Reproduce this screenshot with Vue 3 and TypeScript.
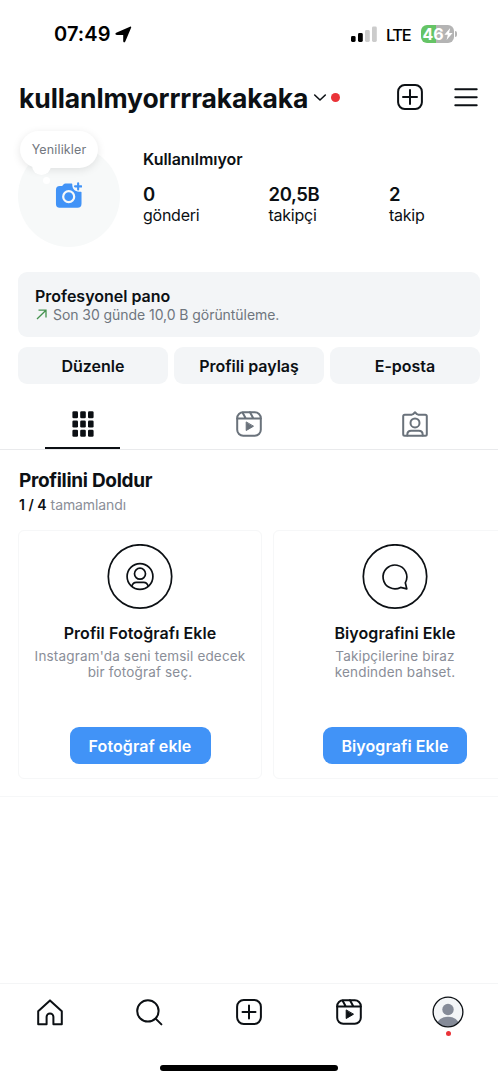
<script setup lang="ts">
interface Stat { value: string; label: string }
interface Card { kind: 'person' | 'chat'; title: string; lines: string[]; action: string }

const stats: Stat[] = [
  { value: '0', label: 'gönderi' },
  { value: '20,5B', label: 'takipçi' },
  { value: '2', label: 'takip' },
]
const actions: string[] = ['Düzenle', 'Profili paylaş', 'E-posta']
const cards: Card[] = [
  { kind: 'person', title: 'Profil Fotoğrafı Ekle', lines: ["Instagram'da seni temsil edecek", 'bir fotoğraf seç.'], action: 'Fotoğraf ekle' },
  { kind: 'chat', title: 'Biyografini Ekle', lines: ['Takipçilerine biraz', 'kendinden bahset.'], action: 'Biyografi Ekle' },
]
</script>

<template>
  <div class="screen">
    <div class="status">
      <span class="time">07:49</span>
      <svg class="loc" width="17" height="17" viewBox="0 0 17 17"><path d="M1.200 6.700 15 .7c.9-.4 1.500.3 1.100 1.100L10.300 15.600c-.6 1.300-2.100 1-2.100-.5V8.900H1.900C.2 8.900-.1 7.300 1.200 6.700z" fill="#000" /></svg>
      <svg class="signal" width="26" height="17" viewBox="0 0 26 17">
        <rect x="0" y="10" width="4.600" height="6" rx="1.400" /><rect x="7" y="7" width="4.800" height="9" rx="1.400" />
        <rect class="off" x="14" y="4" width="4.800" height="12" rx="1.400" /><rect class="off" x="21" y="0.500" width="4.800" height="15.500" rx="1.400" />
      </svg>
      <span class="lte">LTE</span>
      <div class="battery">
        <span class="pct">46</span>
        <svg width="9" height="12" viewBox="0 0 9 12"><path d="M6.200 0 .4 6.800h3.400L2.600 12l6-7.100H5.100z" fill="#fff" /></svg>
      </div>
      <div class="nub"></div>
    </div>

    <header class="head">
      <h1>kullanlmyorrrrakakaka</h1>
      <svg class="chev" width="14" height="9" viewBox="0 0 14 9"><path d="m1.700 2 5.300 5 5.300-5" /></svg>
      <i class="dot"></i>
      <svg class="add" width="26" height="26" viewBox="0 0 26 26"><rect x="1.100" y="1.100" width="23.800" height="23.800" rx="6.600" /><path d="M13 6v14M6 13h14" /></svg>
      <svg class="menu" width="24" height="20" viewBox="0 0 24 20"><path d="M1.300 2.300h21.400M1.300 10.300h21.400M1.300 18.300h21.400" /></svg>
    </header>

    <section class="profile">
      <div class="avatar">
        <svg class="camera" width="27" height="27" viewBox="0 0 28 28">
          <path d="M5 4.200h2.400L9 2.300C9.500 1.700 10 1.500 10.800 1.500h6.500c.3 0 .6.400.6.800-.1 4.700 2.500 7.500 7 7.700h2c.4 0 .6.300.6.700v11.600c0 3.200-1.300 4.300-4.200 4.300H5.500C2.200 26.600 1 25.400 1 22.200V8.400c0-3 1.200-4.200 4-4.200z" fill="#4193f7" />
          <circle cx="14.200" cy="15.200" r="5.700" fill="none" stroke="#f7f9f9" stroke-width="2.300" />
          <path d="M24 1.300v6.400M20.800 4.500h6.400" stroke="#4193f7" stroke-width="2.200" stroke-linecap="round" />
        </svg>
        <div class="bubble"><span>Yenilikler</span></div>
        <i class="tail"></i><i class="bead"></i>
      </div>
      <div class="info">
        <div class="name">Kullanılmıyor</div>
        <div class="stats">
          <div v-for="s in stats" :key="s.label" class="stat"><b>{{ s.value }}</b><span>{{ s.label }}</span></div>
        </div>
      </div>
    </section>

    <section class="panel">
      <div class="ptitle">Profesyonel pano</div>
      <div class="psub">
        <svg width="12" height="12" viewBox="0 0 12 12"><path d="M1 10 9.700 1.500M2.500 1.200h7.500v7.300" /></svg>
        <span>Son 30 günde 10,0 B görüntüleme.</span>
      </div>
    </section>

    <div class="actions"><button v-for="a in actions" :key="a">{{ a }}</button></div>

    <div class="tabs">
      <div class="tab active">
        <svg width="22" height="26" viewBox="0 0 22 26">
          <template v-for="r in 3" :key="r">
            <rect v-for="c in 3" :key="c" :x="(c - 1) * 7.800 + 0.400" :y="(r - 1) * 9.300 + 0.200" width="5.600" height="7" rx="1.300" fill="#0c1014" />
          </template>
        </svg>
      </div>
      <div class="tab">
        <svg class="line grey" width="26" height="26" viewBox="0 0 26 26">
          <rect x="1.200" y="1.200" width="23.600" height="23.600" rx="6" /><path d="M1.200 7.400h23.600M6.500 1.500l3.300 5.900M14 1.200l3.400 6.200" /><path class="fill" d="M10.200 11.300v8.200l7-4.100z" />
        </svg>
      </div>
      <div class="tab">
        <svg class="line grey" width="26" height="26" viewBox="0 0 26 26">
          <path d="M2.700 3.700h7.100l1.200-.5 2-1.900 2 1.900 1.200.5h7.100c1 0 1.500.5 1.500 1.500v18.100c0 1-.5 1.500-1.500 1.500H2.700c-1 0-1.500-.5-1.500-1.500V5.200c0-1 .5-1.500 1.500-1.500z" /><circle cx="13" cy="11.900" r="4.500" /><path d="M5.300 24.500v-.8c0-2.200 1.600-3.900 3.900-3.900h7.600c2.300 0 3.900 1.700 3.900 3.900v.8" />
        </svg>
      </div>
    </div>

    <section class="complete">
      <h2>Profilini Doldur</h2>
      <p class="progress"><b>1 / 4</b><span>tamamlandı</span></p>
      <div class="cards">
        <article v-for="c in cards" :key="c.title" class="card" :class="c.kind">
          <svg class="badge" width="66" height="66" viewBox="0 0 66 66">
            <circle cx="33" cy="32.500" r="31.700" />
            <template v-if="c.kind === 'person'">
              <circle cx="33" cy="32.500" r="12.900" /><circle cx="33" cy="29.700" r="5.500" /><path d="M24.800 42c.8-2.300 2.200-3.700 4.400-3.700h7.600c2.200 0 3.600 1.400 4.400 3.700" />
            </template>
            <path v-else d="M43.300 38.800A11.900 11.900 0 1 0 38.600 43.400l6.200 1.500z" />
          </svg>
          <h3>{{ c.title }}</h3>
          <p><span v-for="l in c.lines" :key="l">{{ l }}</span></p>
          <button>{{ c.action }}</button>
        </article>
      </div>
    </section>

    <nav class="nav">
      <div><svg class="line" width="26" height="27" viewBox="0 0 26 27"><path d="M1.200 25.300V12.300L13 1.400l11.800 10.900v13h-8.400v-7.500a3.400 3.400 0 0 0-6.800 0v7.500z" /></svg></div>
      <div><svg class="line" width="27" height="27" viewBox="0 0 27 27"><circle cx="11.900" cy="11.900" r="10.700" /><path d="m19.600 19.600 5.800 5.800" /></svg></div>
      <div><svg class="line" width="26" height="26" viewBox="0 0 26 26"><rect x="1.100" y="1.100" width="23.800" height="23.800" rx="6.600" /><path d="M13 6.500v13M6.500 13h13" /></svg></div>
      <div><svg class="line" width="26" height="26" viewBox="0 0 26 26"><rect x="1.200" y="1.200" width="23.600" height="23.600" rx="6" /><path d="M1.200 7.400h23.600M6.500 1.500l3.300 5.900M14 1.200l3.400 6.200" /><path class="fill" d="M10.200 11.300v8.200l7-4.100z" /></svg></div>
      <div class="me">
        <svg width="32" height="32" viewBox="0 0 32 32">
          <defs><clipPath id="face"><circle cx="16" cy="16" r="14.500" /></clipPath></defs>
          <circle cx="16" cy="16" r="15" fill="#f3f5f7" /><g clip-path="url(#face)" fill="#858b98"><circle cx="16" cy="13.500" r="5.700" /><ellipse cx="16" cy="28.700" rx="11" ry="8" /></g>
          <circle cx="16" cy="16" r="14.900" fill="none" stroke="#0c1014" stroke-width="1.300" />
        </svg>
        <i></i>
      </div>
    </nav>
    <div class="homebar"></div>
  </div>
</template>

<style>
body { margin: 0; background: #fff; }
</style>

<style scoped>
* { box-sizing: border-box; }
.screen { position: relative; width: 498px; height: 1080px; overflow: hidden; background: #fff; color: #0c1014; font-family: Inter, "Liberation Sans", sans-serif; display: flex; flex-direction: column; white-space: nowrap; }
h1, h2, h3, p { margin: 0; }
button { border: 0; padding: 0; font: inherit; color: inherit; }
svg { display: block; flex: none; }
.status { height: 68px; padding-left: 54px; display: flex; align-items: center; color: #000; }
.time { width: 61px; font-size: 20px; font-weight: 600; letter-spacing: .1px; }
.loc { width: 17px; }
.signal { margin-left: 219px; }
.signal .off { fill: #ccc; }
.lte { width: 35px; margin-left: 9px; padding-top: 1px; font-size: 16.500px; font-weight: 500; letter-spacing: -1.400px; }
.battery { width: 33px; height: 18px; border-radius: 6px; background: linear-gradient(90deg, #65c466 46%, #b4b4b4 46%); display: flex; align-items: center; justify-content: center; color: #fff; }
.pct { font-size: 16px; font-weight: 700; line-height: 18px; }
.nub { width: 2px; height: 6px; margin-left: 1px; border-radius: 0 2px 2px 0; background: #b4b4b4; }
.head { height: 58px; padding-left: 19px; display: flex; align-items: center; }
h1 { width: 294px; padding-top: 1px; font-size: 26.500px; font-weight: 700; letter-spacing: -.12px; line-height: 32px; }
.chev, .add, .menu, .line, .badge { fill: none; stroke: #0c1014; stroke-width: 2; stroke-linecap: round; stroke-linejoin: round; }
.chev { stroke-width: 1.600; }
.dot { width: 9px; height: 9px; margin-left: 4px; border-radius: 50%; background: #ea3338; }
.add { margin-left: 57px; }
.menu { margin-left: 31px; }
.profile { height: 146px; display: flex; }
.avatar { position: relative; width: 102px; height: 102px; margin: 19px 0 0 18px; border-radius: 50%; background: #f7f9f9; }
.camera { position: absolute; left: 37px; top: 37px; }
.bubble { position: absolute; left: 2px; top: -14px; width: 78px; height: 37px; border-radius: 18.500px; background: #fff; box-shadow: 0 2px 8px rgba(0, 0, 0, .1); display: flex; align-items: center; justify-content: center; color: #737880; font-size: 12.500px; letter-spacing: .15px; }
.tail { position: absolute; left: 14px; top: 18px; width: 19px; height: 12px; border-radius: 2px 2px 10px 10px; background: #fff; }
.bead { position: absolute; left: 25px; top: 32px; width: 7px; height: 7px; border-radius: 50%; background: #fff; }
.info { padding: 22px 0 0 23px; }
.name { font-size: 16px; font-weight: 600; line-height: 22px; letter-spacing: -.04px; }
.stats { margin-top: 14px; display: grid; grid-template-columns: 125.500px 120.500px 80px; }
.stat { display: flex; flex-direction: column; }
.stat b { font-size: 18.500px; font-weight: 600; line-height: 21px; letter-spacing: -.4px; }
.stat span { font-size: 16px; line-height: 21px; letter-spacing: -.25px; }
.panel { height: 65px; margin: 0 18px; padding: 14px 17px; border-radius: 9px; background: #f3f5f7; }
.ptitle { font-size: 16px; font-weight: 600; line-height: 20px; }
.psub { display: flex; align-items: center; gap: 5px; font-size: 14px; line-height: 17px; letter-spacing: -.06px; color: #6f767e; }
.psub svg { margin-left: 1px; fill: none; stroke: #459350; stroke-width: 1.300; }
.actions { height: 37px; margin: 10px 18px 0; display: grid; grid-template-columns: 1fr 1fr 1fr; gap: 6px; }
.actions button { border-radius: 9px; background: #f3f5f7; font-size: 16px; font-weight: 600; }
.tabs { height: 66px; border-bottom: 1px solid #e9eaec; display: grid; grid-template-columns: 1fr 1fr 1fr; }
.tab { position: relative; display: flex; justify-content: center; padding-top: 27px; }
.tab.active::after { content: ""; position: absolute; left: 45px; bottom: 0; width: 75px; height: 2px; background: #0c1014; }
.grey { stroke: #6a727b; }
.fill { fill: #0c1014; stroke-width: 1; }
.grey .fill { fill: #6a727b; }
.complete { height: 347px; padding: 18px 0 0 18px; border-bottom: 1px solid #f6f7f8; }
h2 { font-size: 19px; font-weight: 700; line-height: 24px; padding: 1px 0 0 1px; letter-spacing: -.3px; }
.progress { height: 18px; margin-top: 3px; padding-left: 1px; display: flex; gap: 4px; font-size: 14px; line-height: 18px; color: #8a8e98; }
.progress b { font-weight: 600; color: #0c1014; }
.progress span { letter-spacing: -.1px; }
.cards { margin-top: 16px; display: flex; gap: 11px; }
.card { flex: none; width: 244px; height: 249px; border: 1px solid #f6f7f8; border-radius: 6px; padding-top: 13px; display: flex; flex-direction: column; align-items: center; }
.badge { stroke-width: 1.700; }
h3 { margin-top: 12px; font-size: 16px; font-weight: 600; line-height: 22px; letter-spacing: .08px; }
.card p { margin-top: 4px; height: 32px; color: #8a8e98; font-size: 13.500px; letter-spacing: .17px; line-height: 16px; text-align: center; }
.card p span { display: block; }
.card button { width: 141px; height: 37px; margin-top: 47px; border-radius: 9px; background: #4193f7; color: #fff; font-size: 16px; font-weight: 600; letter-spacing: .08px; }
.card.chat button { width: 144px; }
.nav { height: 97px; margin-top: auto; padding-top: 15px; border-top: 1px solid #f4f5f6; display: grid; grid-template-columns: repeat(5, 1fr); }
.nav > div { display: flex; justify-content: center; }
.nav .me { flex-direction: column; align-items: center; justify-content: flex-start; margin-top: -3px; }
.me i { width: 5px; height: 5px; margin-top: 3px; border-radius: 50%; background: #ea3338; }
.homebar { position: absolute; left: 160px; top: 1065px; width: 178px; height: 6px; border-radius: 3px; background: #000; }
</style>
